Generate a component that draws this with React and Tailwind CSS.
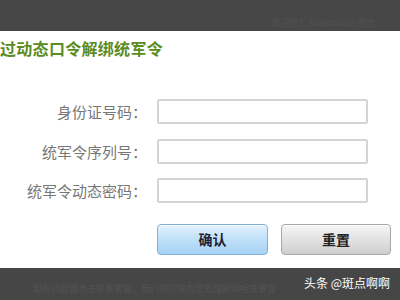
import React from 'react';

const font = { fontFamily: '"Noto Sans CJK SC", "Noto Sans", sans-serif' };

const Row = ({ label }) => (
  <div className="flex items-center h-[25px]">
    <div className="w-[157px] pr-[10px] text-right text-[15px] text-[#777] leading-none">{label}</div>
    <div className="w-[211px] h-[25px] border-2 border-[#d4d4d4] bg-white rounded-[2px]"></div>
  </div>
);

export default function App() {
  return (
    <div className="w-[400px] h-[300px] overflow-hidden flex flex-col bg-white" style={font}>
      {/* top bar */}
      <div className="h-[31px] bg-[#474747] flex items-end justify-end pr-[25px] pb-[4px]">
        <span className="text-[9px] text-[#525252] leading-none">欢迎您！ freehoo.cn 退出</span>
      </div>

      {/* dialog */}
      <div className="h-[237px] flex flex-col">
        <div className="pt-[8px] pl-0 text-[16px] font-bold text-[#5b8c1f] leading-[18px] tracking-[0.3px]">过动态口令解绑统军令</div>
        <div className="mt-[42px] flex flex-col gap-[14.5px]">
          <Row label="身份证号码：" />
          <Row label="统军令序列号：" />
          <Row label="统军令动态密码：" />
        </div>
        <div className="mt-[21px] flex pl-[157px] gap-[13px]">
          <div className="w-[111px] h-[31px] rounded-[4px] border border-[#7fb0d8] bg-gradient-to-b from-[#e4f2fd] via-[#bfe0f8] to-[#a6d2f3] flex items-center justify-center text-[14px] font-bold text-[#223] shadow-[inset_0_1px_0_#fff]">确认</div>
          <div className="w-[110px] h-[31px] rounded-[4px] border border-[#a8a8a8] bg-gradient-to-b from-[#f6f6f6] via-[#e2e2e2] to-[#cfcfcf] flex items-center justify-center text-[14px] font-bold text-[#222] shadow-[inset_0_1px_0_#fff]">重置</div>
        </div>
      </div>

      {/* bottom bar */}
      <div className="flex-1 bg-[#464646] relative flex items-end pl-[33px] pb-[7px]">
        <span className="text-[9px] text-[#535353] leading-none">如有问题请点击联系客服，我们将尽快为您处理解绑相关事宜</span>
        <span className="absolute right-[10px] top-[9px] text-[12px] text-white leading-none">头条 @斑点啊啊</span>
      </div>
    </div>
  );
}
